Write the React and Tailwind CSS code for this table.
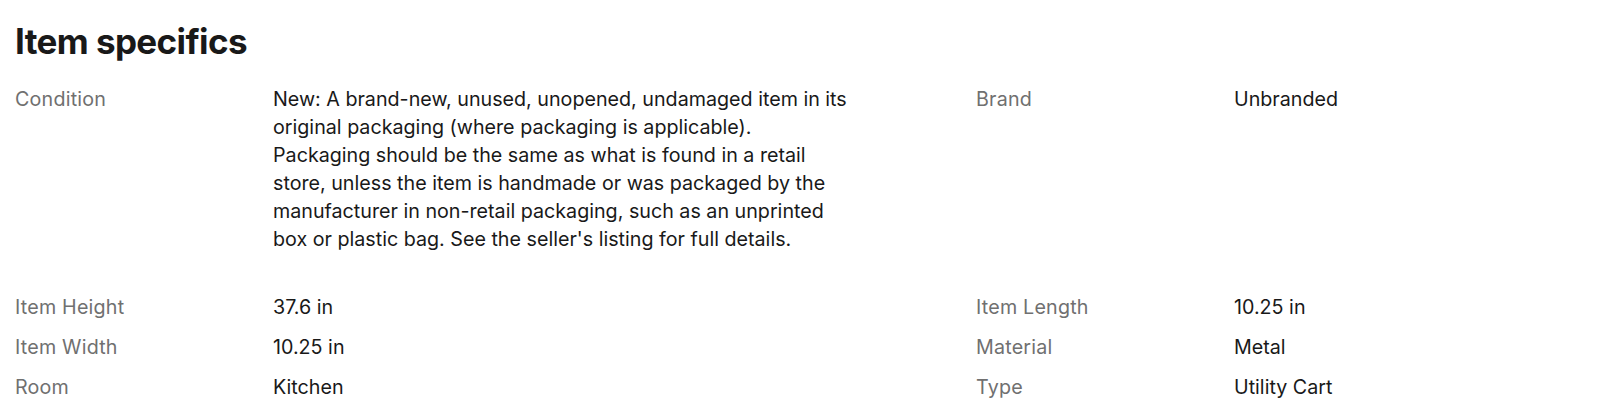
export default function App() {
  const rows = [
    ["Item Height", "37.6 in", "Item Length", "10.25 in"],
    ["Item Width", "10.25 in", "Material", "Metal"],
    ["Room", "Kitchen", "Type", "Utility Cart"],
  ];
  const lines = [
    "New: A brand-new, unused, unopened, undamaged item in its",
    "original packaging (where packaging is applicable).",
    "Packaging should be the same as what is found in a retail",
    "store, unless the item is handmade or was packaged by the",
    "manufacturer in non-retail packaging, such as an unprinted",
    "box or plastic bag. See the seller's listing for full details.",
  ];
  return (
    <div className="w-[1600px] h-[415px] bg-white px-[15px] pt-[19px]" style={{ fontFamily: "Inter, 'Open Sans', Arial, sans-serif" }}>
      <h2 className="text-[35px] leading-[44px] font-bold text-[#191919] tracking-[-0.6px]">Item specifics</h2>
      <div className="mt-[22px] grid grid-cols-[258px_703px_258px_1fr] gap-y-[12px] text-[19.7px] leading-[28px]">
        <div className="text-[#707070] tracking-[0.2px] pb-[28px]">Condition</div>
        <div className="text-[#191919] pb-[28px]">
          {lines.map((l) => (
            <div key={l} className="whitespace-nowrap">{l}</div>
          ))}
        </div>
        <div className="text-[#707070] tracking-[0.2px]">Brand</div>
        <div className="text-[#191919]">Unbranded</div>
        {rows.map((r) => (
          <>
            <div key={r[0]} className="text-[#707070] tracking-[0.2px]">{r[0]}</div>
            <div key={r[0] + "v"} className="text-[#191919]">{r[1]}</div>
            <div key={r[2]} className="text-[#707070] tracking-[0.2px]">{r[2]}</div>
            <div key={r[2] + "v"} className="text-[#191919]">{r[3]}</div>
          </>
        ))}
      </div>
    </div>
  );
}
